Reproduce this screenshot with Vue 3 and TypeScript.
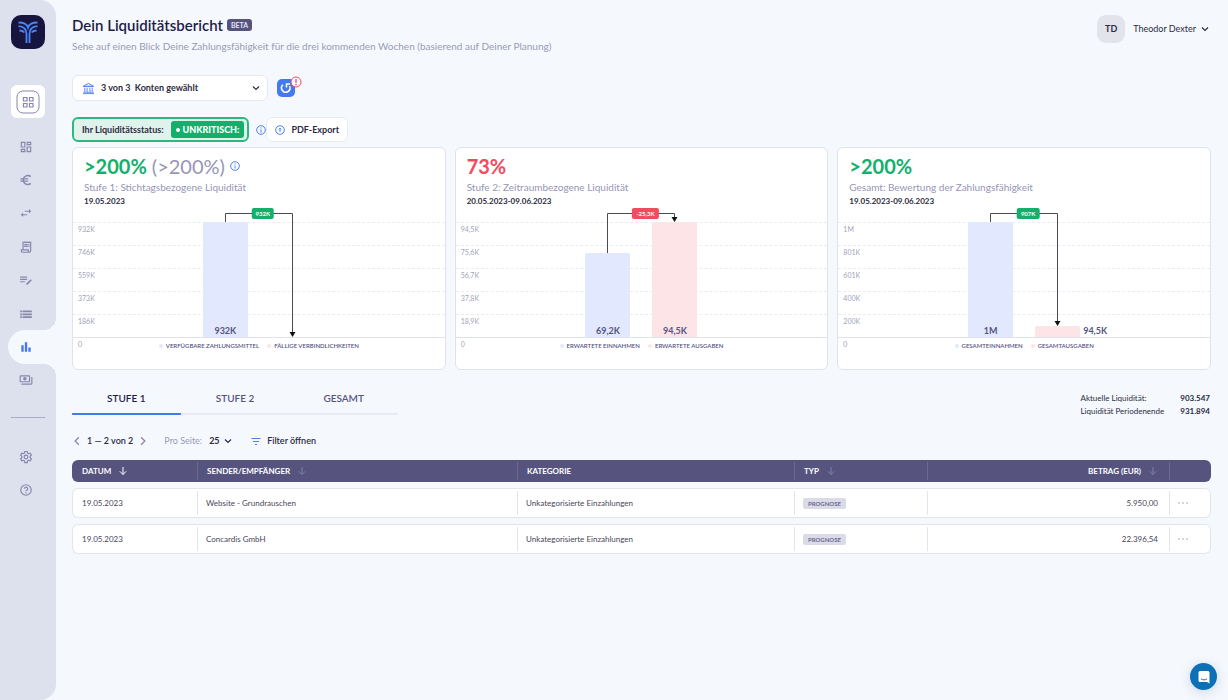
<script setup lang="ts">
import { ref } from 'vue'

interface Bar {
  value: number
  label: string
  tone: 'blue' | 'rose'
  outside?: boolean
}

interface Report {
  id: string
  percent: string
  secondary?: string
  tone: 'good' | 'bad'
  title: string
  period: string
  ticks: string[]
  max: number
  bars: Bar[]
  delta: string
  legend: [string, string]
}

const PLOT_HEIGHT = 115
const CONNECTOR_RISE = 9

const reports: Report[] = [
  {
    id: 'stufe1',
    percent: '>200%',
    secondary: '(>200%)',
    tone: 'good',
    title: 'Stufe 1: Stichtagsbezogene Liquidität',
    period: '19.05.2023',
    ticks: ['932K', '746K', '559K', '373K', '186K', '0'],
    max: 932,
    bars: [
      { value: 932, label: '932K', tone: 'blue' },
      { value: 0, label: '', tone: 'rose' },
    ],
    delta: '932K',
    legend: ['Verfügbare Zahlungsmittel', 'Fällige Verbindlichkeiten'],
  },
  {
    id: 'stufe2',
    percent: '73%',
    tone: 'bad',
    title: 'Stufe 2: Zeitraumbezogene Liquidität',
    period: '20.05.2023-09.06.2023',
    ticks: ['94,5K', '75,6K', '56,7K', '37,8K', '18,9K', '0'],
    max: 94.5,
    bars: [
      { value: 69.2, label: '69,2K', tone: 'blue' },
      { value: 94.5, label: '94,5K', tone: 'rose' },
    ],
    delta: '-25,3K',
    legend: ['Erwartete Einnahmen', 'Erwartete Ausgaben'],
  },
  {
    id: 'gesamt',
    percent: '>200%',
    tone: 'good',
    title: 'Gesamt: Bewertung der Zahlungsfähigkeit',
    period: '19.05.2023-09.06.2023',
    ticks: ['1M', '801K', '601K', '400K', '200K', '0'],
    max: 1001,
    bars: [
      { value: 1001, label: '1M', tone: 'blue' },
      { value: 94.5, label: '94,5K', tone: 'rose', outside: true },
    ],
    delta: '907K',
    legend: ['Gesamteinnahmen', 'Gesamtausgaben'],
  },
]

const barTop = (r: Report, i: number) =>
  Math.round(PLOT_HEIGHT * (1 - r.bars[i].value / r.max)) + CONNECTOR_RISE

const connector = (r: Report) => `M22.5 ${barTop(r, 0)}V.5H89.5V${barTop(r, 1) - 4}`
const arrow = (r: Report) => {
  const tip = barTop(r, 1)
  return `M86.5 ${tip - 5}h6l-3 5z`
}

const tabs = ['Stufe 1', 'Stufe 2', 'Gesamt']
const activeTab = ref(0)
const pageSize = ref('25')
const account = ref('all')

const rows = [
  { date: '19.05.2023', party: 'Website - Grundrauschen', category: 'Unkategorisierte Einzahlungen', type: 'Prognose', amount: '5.950,00' },
  { date: '19.05.2023', party: 'Concardis GmbH', category: 'Unkategorisierte Einzahlungen', type: 'Prognose', amount: '22.396,54' },
]

const nav = [
  { name: 'Dashboard', d: 'M3 13h8V3H3v10zm2-8h4v6H5V5zm8 16h8V11h-8v10zm2-8h4v6h-4v-6zM13 3v6h8V3h-8zm6 4h-4V5h4v2zM3 21h8v-6H3v6zm2-4h4v2H5v-2z' },
  { name: 'Finanzen', d: 'M15 18.5c-2.5 0-4.700-1.400-5.800-3.500H15l1-2H8.600a6.500 6.500 0 0 1 0-2H15l1-2H9.200A6.500 6.500 0 0 1 15 5.500c1.600 0 3.100.6 4.200 1.600L21 5.300A9 9 0 0 0 6.500 9H3l-1 2h4.100a9 9 0 0 0 0 2H3l-1 2h4.500A9 9 0 0 0 21 18.700l-1.800-1.800a6.500 6.500 0 0 1-4.200 1.600z' },
  { name: 'Umsätze', d: 'M7 11 3 15l4 4v-3h7v-2H7v-3zm14-2-4-4v3h-7v2h7v3l4-4z' },
  { name: 'Belege', d: 'M19.500 3.500 18 2l-1.500 1.500L15 2l-1.500 1.500L12 2l-1.500 1.500L9 2 7.500 3.500 6 2v14H3v3a3 3 0 0 0 3 3h12a3 3 0 0 0 3-3V2l-1.500 1.500zM15 20H6a1 1 0 0 1-1-1v-1h10v2zm4-1a1 1 0 0 1-2 0v-3H8V5h11v14zM9 7h6v2H9zm7 0h2v2h-2zM9 10h6v2H9zm7 0h2v2h-2z' },
  { name: 'Planung', d: 'M2 10h12v2H2zm0-4h12v2H2zm0 8h8v2H2zM20 10.500l2 2-7.500 7.500H12.500v-2z' },
  { name: 'Liste', d: 'M2 6h3v3H2zm0 5h3v3H2zm0 5h3v3H2zM6 6h16v3H6zm0 5h16v3H6zm0 5h16v3H6z' },
  { name: 'Liquidität', d: 'M4 9h4v11H4zM10 4h4v16h-4zM16 13h4v7h-4z', active: true },
  { name: 'Zahlungen', d: 'M19 14V6a2 2 0 0 0-2-2H3a2 2 0 0 0-2 2v8c0 1.100.9 2 2 2h14a2 2 0 0 0 2-2zm-2 0H3V6h14v8zm-7-7a3 3 0 1 0 0 6 3 3 0 0 0 0-6zm13 0v11a2 2 0 0 1-2 2H4v-2h17V7h2z' },
]
</script>

<template>
  <div class="app">
    <aside class="sidebar">
      <a class="logo" href="#" aria-label="Startseite">
        <svg viewBox="0 0 34 34" fill="none" stroke="#4a84f5" stroke-width="1.800">
          <path d="M7.500 7.500c5.500 0 8.500 1.500 9.500 5 1-3.500 4-5 9.500-5" />
          <path d="M7.500 11.200c5.500.3 8 2.800 8 7.800v9M26.500 11.200c-5.500.3-8 2.800-8 7.800v9" />
          <path d="M8.500 15.500c2.500 0 3.800.6 4.800 2M25.500 15.500c-2.500 0-3.800.6-4.800 2" />
        </svg>
      </a>
      <button class="apps" type="button" aria-label="Apps">
        <svg viewBox="0 0 24 24" fill="none" stroke="#8785ad">
          <rect x="1" y="1" width="22" height="22" rx="6" />
          <path d="M7.500 7.500h3.500v3.500H7.500zM13.500 7.500H17v3.500h-3.500zM7.500 13.500h3.500V17H7.500zM13.500 13.500H17V17h-3.500z" stroke-width="1.200" />
        </svg>
      </button>
      <nav class="nav">
        <a v-for="item in nav" :key="item.name" href="#" :class="{ active: item.active }" :aria-label="item.name">
          <svg class="nav-icon" viewBox="0 0 24 24"><path :d="item.d" /></svg>
        </a>
      </nav>
      <hr class="divider">
      <nav class="nav nav-low">
        <a href="#" aria-label="Einstellungen">
          <svg class="nav-icon" viewBox="0 0 24 24" fill="none">
            <path class="line" d="M10 2.500h4l.6 2.800 1.900 1.100 2.700-.9 2 3.500-2.100 1.900v2.200l2.100 1.900-2 3.500-2.700-.9-1.900 1.100-.6 2.800h-4l-.6-2.800-1.900-1.100-2.700.9-2-3.500 2.100-1.900v-2.200L2.800 9l2-3.500 2.700.9 1.900-1.100z" />
            <circle class="line" cx="12" cy="12" r="3.200" />
          </svg>
        </a>
        <a href="#" aria-label="Hilfe">
          <svg class="nav-icon" viewBox="0 0 24 24" fill="none">
            <circle class="line" cx="12" cy="12" r="9" />
            <path class="line" d="M9.200 10a2.800 2.800 0 1 1 4.300 2.300c-1 .7-1.500 1-1.500 2M12 15.800v2" />
          </svg>
        </a>
      </nav>
    </aside>

    <main class="main">
      <header class="header">
        <div>
          <h1>Dein Liquiditätsbericht <span class="beta">BETA</span></h1>
          <p class="subtitle">Sehe auf einen Blick Deine Zahlungsfähigkeit für die drei kommenden Wochen (basierend auf Deiner Planung)</p>
        </div>
        <button class="user" type="button">
          <span class="avatar">TD</span>
          <span class="user-name">Theodor Dexter</span>
          <svg class="chevron" viewBox="0 0 8 8"><path d="M1 2.500l3 3 3-3" /></svg>
        </button>
      </header>

      <div class="accounts">
        <label class="account-select">
          <svg class="bank" viewBox="0 0 14 14" fill="none" stroke="#4a80ee">
            <path d="M1.500 4.500 7 1.500l5.500 3zM1.500 5h11M3 6.500v4M5.500 6.500v4M8.500 6.500v4M11 6.500v4M1.500 11h11M1 12.500h12" />
          </svg>
          <select v-model="account" aria-label="Konten">
            <option value="all">3 von 3&nbsp; Konten gewählt</option>
          </select>
          <svg class="chevron" viewBox="0 0 8 8"><path d="M1 2.500l3 3 3-3" /></svg>
        </label>
        <button class="refresh" type="button" aria-label="Aktualisieren">
          <svg viewBox="0 0 18 18" fill="none" stroke="#fff" stroke-width="1.500">
            <path d="M6 5.800A4.200 4.200 0 1 0 12.500 7M9.500 8.500V5h3.500" />
          </svg>
          <svg class="alert" viewBox="0 0 12 12" fill="none" stroke="#ee4b55">
            <circle cx="6" cy="6" r="5" fill="#f5f9fe" />
            <path d="M6 3v3.800M6 7.800v1.400" stroke-width="1.300" />
          </svg>
        </button>
      </div>

      <div class="status-row">
        <div class="status">
          <span>Ihr Liquiditätsstatus:</span>
          <strong><i class="dot" />UNKRITISCH:</strong>
        </div>
        <svg class="info" viewBox="0 0 10 10"><circle cx="5" cy="5" r="4.300" /><path d="M5 4.500v3M5 2.500v1" /></svg>
        <button class="export" type="button">
          <svg class="info" viewBox="0 0 10 10"><circle cx="5" cy="5" r="4.300" /><path d="M5 7V3.500M3.700 4.500 5 3.200l1.300 1.300" /></svg>
          PDF-Export
        </button>
      </div>

      <section class="cards">
        <article v-for="r in reports" :key="r.id" class="card">
          <div class="card-head">
            <h2 :class="r.tone">
              {{ r.percent }}
              <span v-if="r.secondary">{{ r.secondary }}</span>
              <svg v-if="r.secondary" class="info" viewBox="0 0 10 10"><circle cx="5" cy="5" r="4.300" /><path d="M5 4.500v3M5 2.500v1" /></svg>
            </h2>
            <p class="card-title">{{ r.title }}</p>
            <p class="period">{{ r.period }}</p>
          </div>
          <div class="chart">
            <ul class="ticks">
              <li v-for="t in r.ticks" :key="t">{{ t }}</li>
            </ul>
            <div class="plot">
              <div v-for="b in r.bars" :key="b.tone" class="bar-slot">
                <div class="bar" :class="b.tone" :style="{ height: (b.value / r.max) * 100 + '%' }" />
                <span class="bar-label" :class="{ outside: b.outside }">{{ b.label }}</span>
              </div>
              <svg class="connector" viewBox="0 0 112 124">
                <path :d="connector(r)" fill="none" stroke="#4b4b55" />
                <path :d="arrow(r)" fill="#111" />
              </svg>
              <span class="delta" :class="r.tone">{{ r.delta }}</span>
            </div>
          </div>
          <div class="legend">
            <span><i class="blue" />{{ r.legend[0] }}</span>
            <span><i class="rose" />{{ r.legend[1] }}</span>
          </div>
        </article>
      </section>

      <div class="tab-row">
        <div class="tabs" role="tablist">
          <button
            v-for="(t, i) in tabs"
            :key="t"
            type="button"
            role="tab"
            :aria-selected="activeTab === i"
            :class="{ selected: activeTab === i }"
            @click="activeTab = i"
          >{{ t }}</button>
        </div>
        <dl class="totals">
          <dt>Aktuelle Liquidität:</dt><dd>903.547</dd>
          <dt>Liquidität Periodenende</dt><dd>931.894</dd>
        </dl>
      </div>

      <div class="toolbar">
        <button type="button" class="page" aria-label="Zurück"><svg viewBox="0 0 8 8"><path d="M5.500 1l-3 3 3 3" /></svg></button>
        <span class="range">1 — 2 von 2</span>
        <button type="button" class="page" aria-label="Weiter"><svg viewBox="0 0 8 8"><path d="M2.500 1l3 3-3 3" /></svg></button>
        <label class="size">Pro Seite:
          <select v-model="pageSize"><option>25</option><option>50</option></select>
          <svg class="chevron" viewBox="0 0 8 8"><path d="M1 2.500l3 3 3-3" /></svg>
        </label>
        <button type="button" class="filter">
          <svg viewBox="0 0 10 8" fill="none" stroke="#4a80ee"><path d="M.5 1.500h9M2 4.500h6M4 7.500h2" /></svg>
          Filter öffnen
        </button>
      </div>

      <table class="table">
        <colgroup><col class="c1"><col class="c2"><col class="c3"><col class="c4"><col class="c5"><col class="c6"></colgroup>
        <thead>
          <tr>
            <th>DATUM <svg class="sort on" viewBox="0 0 8 8"><path d="M4 0v7.500M.8 4.300 4 7.500l3.200-3.200" /></svg></th>
            <th>SENDER/EMPFÄNGER <svg class="sort" viewBox="0 0 8 8"><path d="M4 0v7.500M.8 4.300 4 7.500l3.200-3.200" /></svg></th>
            <th>KATEGORIE</th>
            <th>TYP <svg class="sort" viewBox="0 0 8 8"><path d="M4 0v7.500M.8 4.300 4 7.500l3.200-3.200" /></svg></th>
            <th class="num">BETRAG (EUR) <svg class="sort" viewBox="0 0 8 8"><path d="M4 0v7.500M.8 4.300 4 7.500l3.200-3.200" /></svg></th>
            <th />
          </tr>
        </thead>
        <tbody>
          <tr v-for="row in rows" :key="row.party">
            <td>{{ row.date }}</td>
            <td>{{ row.party }}</td>
            <td>{{ row.category }}</td>
            <td><span class="tag">{{ row.type }}</span></td>
            <td class="num">{{ row.amount }}</td>
            <td><button class="more" type="button" aria-label="Mehr"><i /><i /><i /></button></td>
          </tr>
        </tbody>
      </table>
    </main>

    <button class="chat" type="button" aria-label="Chat">
      <svg viewBox="0 0 14 14"><path d="M3 1h8a1.500 1.500 0 0 1 1.500 1.500V13.500L10 12H3a1.500 1.500 0 0 1-1.500-1.500v-8A1.500 1.500 0 0 1 3 1z" fill="#fff" /><path d="M4 8.800c1.800 1.400 4.200 1.400 6 0" fill="none" stroke="#0b70b5" /></svg>
    </button>
  </div>
</template>

<style>
body {
  margin: 0;
  background: #f5f9fe;
}
</style>

<style scoped>
* {
  box-sizing: border-box;
}
.app {
  display: flex;
  min-height: 100vh;
  font-family: Lato, "Liberation Sans", sans-serif;
  font-size: 9px;
  line-height: 12px;
  color: #2c2b40;
}
button,
select {
  font: inherit;
  color: inherit;
  border: 0;
  background: none;
  padding: 0;
  appearance: none;
  cursor: pointer;
}
h1, h2, p, ul, dl, dd {
  margin: 0;
  padding: 0;
}
svg {
  display: block;
  flex: none;
}

/* Sidebar */
.sidebar {
  flex: none;
  width: 56px;
  padding-top: 15px;
  background: #dde0ed;
  border-radius: 0 16px 16px 0;
}
.logo {
  display: block;
  width: 34px;
  height: 34px;
  margin-left: 11px;
  border-radius: 10px;
  background: #17153f;
}
.apps {
  display: flex;
  align-items: center;
  justify-content: center;
  width: 34px;
  height: 33px;
  margin: 36px 0 0 11px;
  border-radius: 6px;
  background: #fff;
}
.apps svg {
  width: 24px;
  height: 24px;
}
.nav {
  display: flex;
  flex-direction: column;
  height: 267px;
  margin-top: 12px;
  padding-left: 8px;
}
.nav a {
  position: relative;
  flex: 1;
  display: flex;
  align-items: center;
  padding-left: 11px;
  border-radius: 17px 0 0 17px;
}
.nav-icon {
  width: 14px;
  height: 14px;
  fill: #8886ad;
}
.nav-icon .line {
  fill: none;
  stroke: #8886ad;
  stroke-width: 2;
}
.nav .active {
  background: #f5f9fe;
}
.nav .active .nav-icon {
  fill: #3f78f2;
}
.nav .active::before,
.nav .active::after {
  content: "";
  position: absolute;
  right: 0;
  width: 12px;
  height: 12px;
}
.nav .active::before {
  bottom: 100%;
  background: radial-gradient(circle at 0 0, transparent 12px, #f5f9fe 12px);
}
.nav .active::after {
  top: 100%;
  background: radial-gradient(circle at 0 100%, transparent 12px, #f5f9fe 12px);
}
.divider {
  width: 34px;
  height: 1px;
  margin: 20px 0 0 11px;
  border: 0;
  background: #a9a9c6;
}
.nav-low {
  height: 67px;
  margin-top: 22px;
}

/* Page */
.main {
  flex: 1;
  min-width: 0;
  padding: 15px 17px 24px 16px;
}
.header {
  display: flex;
  justify-content: space-between;
  align-items: flex-start;
}
h1 {
  display: flex;
  align-items: center;
  gap: 4px;
  font-size: 15px;
  line-height: 20px;
  font-weight: 600;
  color: #1f1c47;
}
.beta {
  padding: 0 4px;
  border-radius: 3px;
  background: #56547f;
  color: #e4e4f0;
  font-size: 7px;
  line-height: 12px;
  font-weight: 700;
}
.subtitle {
  margin-top: 4px;
  font-size: 10px;
  line-height: 14px;
  color: #9b9ab5;
}
.user {
  display: flex;
  align-items: center;
  padding-right: 2px;
}
.avatar {
  width: 28px;
  height: 28px;
  border-radius: 9px;
  background: #e3e3ec;
  line-height: 28px;
  text-align: center;
  font-weight: 700;
}
.user-name {
  margin: 0 5px 0 8px;
}
.chevron {
  width: 8px;
  height: 8px;
  fill: none;
  stroke: #2c2b40;
  stroke-width: 1.200;
}
.accounts {
  display: flex;
  align-items: center;
  gap: 9px;
  margin-top: 22px;
}
.account-select {
  display: flex;
  align-items: center;
  gap: 6px;
  width: 196px;
  height: 26px;
  padding: 0 7px 0 9px;
  border: 1px solid #e5e6f0;
  border-radius: 6px;
  background: #fff;
  font-weight: 700;
}
.account-select select {
  flex: 1;
}
.bank {
  width: 13px;
  height: 13px;
}
.refresh {
  position: relative;
  width: 18px;
  height: 18px;
  border-radius: 5px;
  background: #437af2;
}
.alert {
  position: absolute;
  top: -3px;
  right: -7px;
  width: 12px;
  height: 12px;
}
.status-row {
  display: flex;
  align-items: center;
  margin-top: 16px;
}
.status {
  display: flex;
  align-items: center;
  gap: 7px;
  height: 25px;
  padding: 0 3px 0 8px;
  margin-right: 7px;
  border: 2px solid #2cb87f;
  border-radius: 6px;
  background: #dff3ec;
  font-weight: 700;
}
.status strong {
  display: flex;
  align-items: center;
  gap: 3px;
  padding: 0 5px;
  border-radius: 3px;
  background: #12b06b;
  color: #fff;
  line-height: 17px;
}
.dot {
  width: 4px;
  height: 4px;
  border-radius: 50%;
  background: #fff;
}
.info {
  width: 10px;
  height: 10px;
  fill: none;
  stroke: #4a80ee;
}
.export {
  display: flex;
  align-items: center;
  gap: 6px;
  height: 25px;
  padding: 0 8px;
  border: 1px solid #e9ebf3;
  border-radius: 6px;
  background: #fff;
  font-weight: 700;
}

/* Report cards */
.cards {
  display: grid;
  grid-template-columns: repeat(3, 1fr);
  gap: 9px;
  margin-top: 5px;
}
.card {
  padding-bottom: 18px;
  border: 1px solid #e0e3ee;
  border-radius: 6px;
  background: #fff;
}
.card-head {
  padding: 6px 11px 0;
}
h2 {
  display: flex;
  align-items: center;
  gap: 5px;
  font-size: 20px;
  line-height: 24px;
  font-weight: 700;
}
h2 span {
  color: #9795b6;
  font-weight: 400;
}
h2.good {
  color: #12b06b;
}
h2.bad {
  color: #f24a5e;
}
.card-title {
  margin-top: 2px;
  font-size: 10px;
  line-height: 14px;
  color: #9795b6;
}
.period {
  font-size: 8px;
  line-height: 14px;
  font-weight: 700;
}
.chart {
  position: relative;
  margin-top: 14px;
}
.ticks {
  list-style: none;
}
.ticks li {
  height: 23px;
  padding: 0 5px;
  border-top: 1px dashed #eaecf1;
  font-size: 7px;
  line-height: 12px;
  color: #a3a2bb;
}
.ticks li:last-child {
  height: 12px;
  border-top: 1px solid #dfe3e8;
}
.plot {
  position: absolute;
  inset: 0 0 12px;
  display: flex;
  justify-content: center;
  gap: 22px;
}
.bar-slot {
  position: relative;
  display: flex;
  align-items: flex-end;
  width: 45px;
}
.bar {
  width: 100%;
  border-radius: 2px 2px 0 0;
}
.blue {
  background: #e2e8fe;
}
.rose {
  background: #fde4e6;
}
.bar-label {
  position: absolute;
  bottom: 0;
  width: 100%;
  text-align: center;
  font-weight: 700;
  color: #56547f;
}
.bar-label.outside {
  left: calc(100% + 3px);
  text-align: left;
}
.connector {
  position: absolute;
  top: -9px;
  width: 112px;
  height: 124px;
}
.delta {
  position: absolute;
  top: -14px;
  left: 50%;
  transform: translateX(-50%);
  margin-left: 4px;
  padding: 0 4px;
  border-radius: 2px;
  color: #fff;
  font-size: 6px;
  line-height: 11px;
  font-weight: 700;
}
.delta.good {
  background: #12b06b;
}
.delta.bad {
  background: #f24a5e;
}
.legend {
  display: flex;
  justify-content: center;
  gap: 8px;
  margin-top: -8px;
  font-size: 6px;
  line-height: 10px;
  font-weight: 600;
  text-transform: uppercase;
  color: #56547f;
}
.legend span {
  display: flex;
  align-items: center;
  gap: 3px;
}
.legend i {
  width: 4px;
  height: 4px;
  border-radius: 50%;
}

/* Tabs and totals */
.tab-row {
  display: flex;
  justify-content: space-between;
  align-items: flex-start;
  margin-top: 12px;
}
.tabs {
  display: grid;
  grid-template-columns: repeat(3, 1fr);
  width: 326px;
  border-bottom: 2px solid #e8ebf4;
}
.tabs button {
  height: 33px;
  margin-bottom: -2px;
  border-bottom: 2px solid transparent;
  font-size: 10px;
  font-weight: 600;
  text-transform: uppercase;
  color: #56547f;
}
.tabs .selected {
  border-color: #437af2;
  border-radius: 1px;
  color: #1f1c47;
}
.totals {
  display: grid;
  grid-template-columns: auto auto;
  column-gap: 16px;
  margin: 10px 1px 0 0;
  font-size: 8px;
  line-height: 13px;
}
.totals dd {
  font-weight: 700;
  text-align: right;
}
.toolbar {
  display: flex;
  align-items: center;
  height: 16px;
  margin-top: 15px;
  font-weight: 600;
}
.page svg {
  width: 10px;
  height: 10px;
  fill: none;
  stroke: #8886ad;
}
.range {
  margin: 0 5px;
}
.size {
  display: flex;
  align-items: center;
  margin: 0 19px 0 16px;
  gap: 7px;
  font-weight: 400;
  color: #9b9ab5;
}
.size select {
  margin-right: -3px;
  font-weight: 700;
  color: #2c2b40;
}
.filter {
  display: flex;
  align-items: center;
  gap: 6px;
}
.filter svg {
  width: 10px;
  height: 8px;
}

/* Table */
.table {
  width: 100%;
  margin-top: 5px;
  table-layout: fixed;
  border-collapse: separate;
  border-spacing: 0 6px;
  font-size: 8px;
}
.c1 { width: 125px; }
.c2 { width: 320px; }
.c3 { width: 277px; }
.c4 { width: 133px; }
.c5 { width: 242px; }
.c6 { width: 42px; }
th {
  height: 22px;
  padding: 0 10px;
  background: linear-gradient(#6b6a92, #6b6a92) left center / 1px 18px no-repeat #56547f;
  color: #fff;
  font-weight: 700;
  text-align: left;
  white-space: nowrap;
}
td {
  height: 30px;
  padding: 0 9px;
  border: solid #e3e5ee;
  border-width: 1px 0;
  background: linear-gradient(#e3e5ee, #e3e5ee) left center / 1px 24px no-repeat #fff;
  color: #47465a;
}
th:first-child {
  border-radius: 6px 0 0 6px;
  background: #56547f;
}
th:last-child {
  border-radius: 0 6px 6px 0;
}
td:first-child {
  border-left-width: 1px;
  border-radius: 6px 0 0 6px;
  background: #fff;
}
td:last-child {
  border-right-width: 1px;
  border-radius: 0 6px 6px 0;
}
th.num {
  padding-right: 12px;
  text-align: right;
}
td.num {
  padding-right: 11px;
  text-align: right;
}
.sort {
  display: inline-block;
  width: 8px;
  height: 8px;
  margin-left: 6px;
  vertical-align: -1px;
  fill: none;
  stroke: #7f7ea3;
}
.sort.on {
  stroke: #fff;
}
.tag {
  display: inline-block;
  padding: 0 5px;
  border-radius: 2px;
  background: #dbdbe7;
  color: #6a6893;
  font-size: 6px;
  line-height: 11px;
  font-weight: 700;
  text-transform: uppercase;
  vertical-align: middle;
}
.more {
  display: flex;
  gap: 2px;
}
.more i {
  width: 2px;
  height: 2px;
  border-radius: 50%;
  background: #c9c9d6;
}
.chat {
  position: fixed;
  right: 11px;
  bottom: 10px;
  display: flex;
  align-items: center;
  justify-content: center;
  width: 27px;
  height: 27px;
  border-radius: 50%;
  background: #0b70b5;
  box-shadow: 0 2px 12px rgba(30, 40, 90, 0.18);
}
.chat svg {
  width: 14px;
  height: 14px;
}
</style>
